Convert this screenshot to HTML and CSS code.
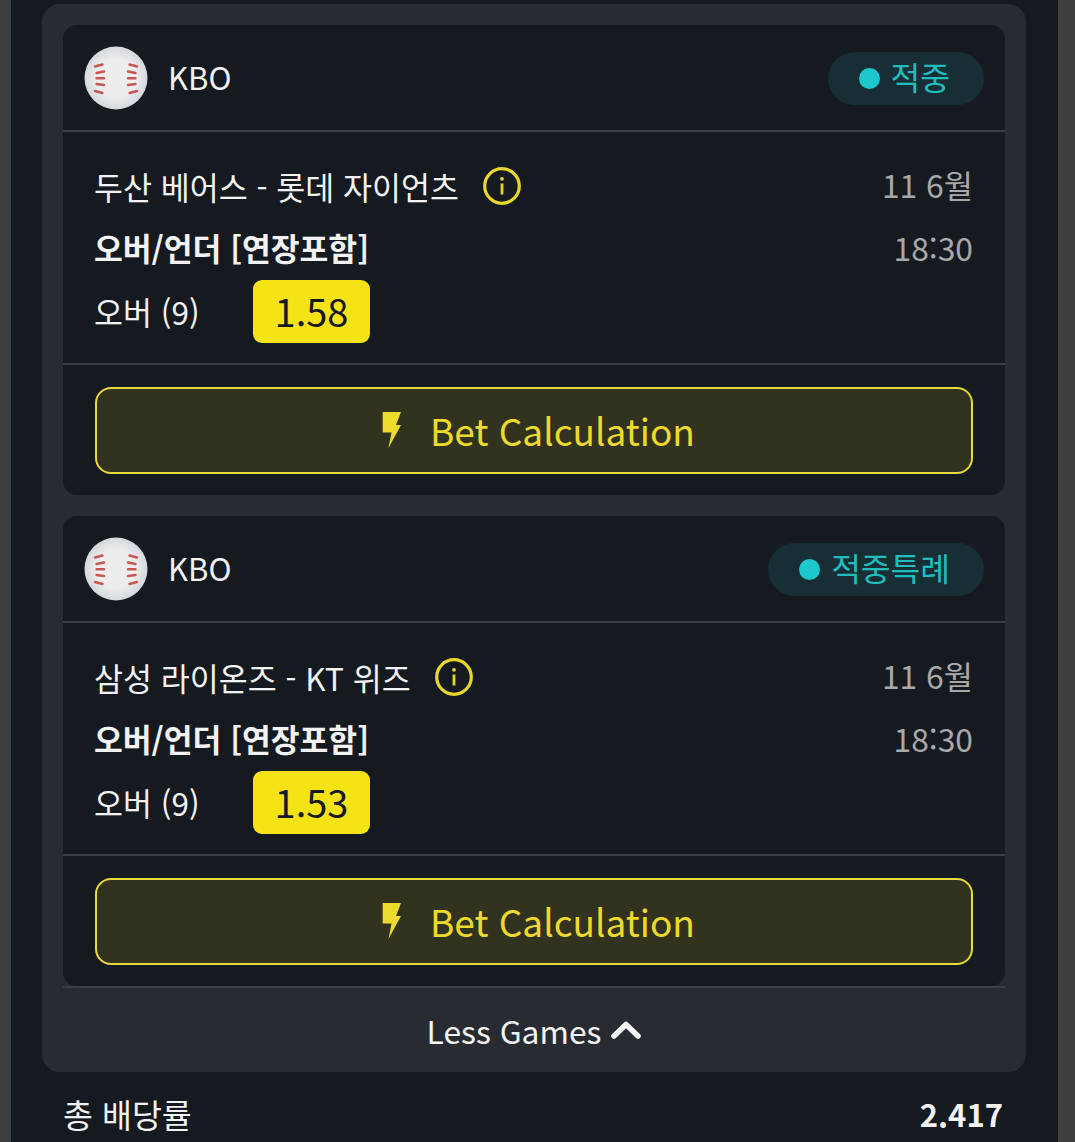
FILE: index.html
```html
<!DOCTYPE html>
<html lang="ko">

<head>
    <meta charset="UTF-8">
    <meta name="viewport" content="width=device-width, initial-scale=1.0">
    <title>Bet Slip</title>
    <link rel="stylesheet" href="styles.css">
</head>

<body>
    <svg class="defs" width="0" height="0" aria-hidden="true">
        <defs>
            <radialGradient id="ballShade" cx="50%" cy="50%" r="50%">
                <stop offset="0.6" stop-color="#ededed"/>
                <stop offset="1" stop-color="#d4d9dd"/>
            </radialGradient>
            <symbol id="ball" viewBox="0 0 64 64">
                <circle cx="32" cy="32" r="31.5" fill="url(#ballShade)"/>
                <g fill="none" stroke="#c9574f" stroke-width="2.4" stroke-linecap="round">
                    <path d="M11 20.500l7.500-2M12.500 27l7.500-1.500M12.500 32.300h7.500M12.500 38l7.500 1M11 45l7.500 2"/>
                    <path d="M53 20.500l-7.500-2M51.500 27l-7.500-1.500M51.500 32.300h-7.500M51.500 38l-7.500 1M53 45l-7.500 2"/>
                </g>
            </symbol>
            <symbol id="bolt" viewBox="0 0 20 36">
                <path d="M0.700 0H19l-5 13h5L6.500 36l3-15.500-8.800 0z" fill="currentColor"/>
            </symbol>
            <symbol id="info" viewBox="0 0 38 38">
                <circle cx="19" cy="19" r="17.300" fill="none" stroke="currentColor" stroke-width="3.200"/>
                <rect x="17.600" y="16.500" width="2.800" height="11" fill="currentColor"/>
                <circle cx="19" cy="11.800" r="1.900" fill="currentColor"/>
            </symbol>
        </defs>
    </svg>

    <div class="page">
        <section class="panel">
            <article class="card">
                <header class="card-head">
                    <div class="league">
                        <svg class="ball"><use href="#ball"/></svg>
                        <span class="league-name">KBO</span>
                    </div>
                    <div class="badge"><i class="dot"></i>적중</div>
                </header>
                <div class="card-body">
                    <div class="row row-match">
                        <div class="match">두산 베어스 - 롯데 자이언츠
                            <svg class="info"><use href="#info"/></svg>
                        </div>
                        <div class="when">11 6월</div>
                    </div>
                    <div class="row row-market">
                        <div class="market">오버/언더 [연장포함]</div>
                        <div class="when">18:30</div>
                    </div>
                    <div class="pick">
                        <span class="pick-name">오버 (9)</span>
                        <span class="odd">1.58</span>
                    </div>
                </div>
                <div class="card-foot">
                    <button class="calc" type="button">
                        <svg class="bolt"><use href="#bolt"/></svg>
                        Bet Calculation
                    </button>
                </div>
            </article>

            <article class="card">
                <header class="card-head">
                    <div class="league">
                        <svg class="ball"><use href="#ball"/></svg>
                        <span class="league-name">KBO</span>
                    </div>
                    <div class="badge"><i class="dot"></i>적중특례</div>
                </header>
                <div class="card-body">
                    <div class="row row-match">
                        <div class="match">삼성 라이온즈 - KT 위즈
                            <svg class="info"><use href="#info"/></svg>
                        </div>
                        <div class="when">11 6월</div>
                    </div>
                    <div class="row row-market">
                        <div class="market">오버/언더 [연장포함]</div>
                        <div class="when">18:30</div>
                    </div>
                    <div class="pick">
                        <span class="pick-name">오버 (9)</span>
                        <span class="odd">1.53</span>
                    </div>
                </div>
                <div class="card-foot">
                    <button class="calc" type="button">
                        <svg class="bolt"><use href="#bolt"/></svg>
                        Bet Calculation
                    </button>
                </div>
            </article>

            <div class="less">
                Less Games
                <svg class="chevron" viewBox="0 0 30 18"><path d="M3 15L15 3.500 27 15" fill="none" stroke="currentColor" stroke-width="5.500" stroke-linecap="round" stroke-linejoin="round"/></svg>
            </div>
        </section>

        <div class="total">
            <span>총 배당률</span>
            <strong>2.417</strong>
        </div>
    </div>
</body>

</html>
```

FILE: styles.css
```css
/* Bet slip */
html,
body {
    height: 1142px;
    margin: 0;
    overflow: hidden;
}

body {
    background-color: #3f3f3f;
    font-family: "Noto Sans CJK KR", "Noto Sans", sans-serif;
    color: #f2f2f2;
}

.defs {
    display: block;
}

.page {
    margin: 0 17px 0 11px;
    padding: 4px 32px 0 31px;
    height: 1138px;
    background-color: #151a20;
}

.panel {
    background-color: #282c32;
    border-radius: 18px;
    padding: 21px 21px 0;
}

.card {
    background-color: #151a20;
    border-radius: 14px;
    margin-bottom: 21px;
}

.card:nth-child(2) {
    margin-bottom: 0;
}

.card-head {
    display: flex;
    align-items: center;
    justify-content: space-between;
    height: 107px;
    padding: 1px 21px 0 21px;
    box-sizing: border-box;
    border-bottom: 2px solid #3b3e42;
}

.league {
    display: flex;
    align-items: center;
    gap: 20px;
    font-size: 31px;
}

.league-name {
    margin-bottom: 4px;
}

.ball {
    width: 64px;
    height: 64px;
}

.badge {
    display: flex;
    align-items: center;
    gap: 11px;
    height: 53px;
    padding: 0 34px 4px 31px;
    box-sizing: border-box;
    border-radius: 27px;
    background-color: #162e34;
    color: #1fbdbd;
    font-size: 32.3px;
}

.dot {
    width: 21px;
    height: 21px;
    margin-top: 4px;
    border-radius: 50%;
    background-color: #1cc8cc;
}

.card-body {
    padding: 22px 32px 20px 31px;
}

.row {
    display: flex;
    align-items: center;
    justify-content: space-between;
    height: 63px;
}

.match {
    display: flex;
    align-items: center;
    gap: 24px;
    font-size: 31.5px;
}

.info {
    width: 38px;
    height: 38px;
    color: #e8d72a;
}

.market {
    margin-bottom: 2px;
    font-size: 31.3px;
    font-weight: 700;
}

.when {
    margin-bottom: 3px;
    font-size: 31.8px;
    color: #a8a8a8;
}

.pick {
    display: flex;
    align-items: center;
    height: 63px;
    font-size: 31.5px;
}

.pick-name {
    width: 159px;
    margin-bottom: 2px;
}

.odd {
    width: 117px;
    height: 63px;
    line-height: 61px;
    text-align: center;
    border-radius: 9px;
    background-color: #f6e316;
    color: #16191f;
    font-size: 38px;
}

.card-foot {
    padding: 22px 32px 21px;
    border-top: 2px solid #3b3e42;
}

.calc {
    display: flex;
    align-items: center;
    justify-content: center;
    gap: 28px;
    width: 100%;
    height: 87px;
    padding: 0 0 1px 9px;
    border: 2px solid #e9d83c;
    border-radius: 16px;
    background-color: #32331f;
    color: #ecdb2c;
    font-family: inherit;
    font-size: 37px;
}

.bolt {
    width: 20px;
    height: 36px;
}

.less {
    display: flex;
    align-items: center;
    justify-content: center;
    gap: 10px;
    height: 84px;
    border-top: 2px solid #3b3e42;
    font-size: 31.8px;
    color: #f4f4f4;
}

.chevron {
    width: 30px;
    height: 18px;
}

.total {
    display: flex;
    align-items: center;
    justify-content: space-between;
    height: 50px;
    padding: 16px 23px 0 21px;
    font-size: 32.5px;
}

.total strong {
    font-size: 31px;
    font-weight: 700;
}
```
